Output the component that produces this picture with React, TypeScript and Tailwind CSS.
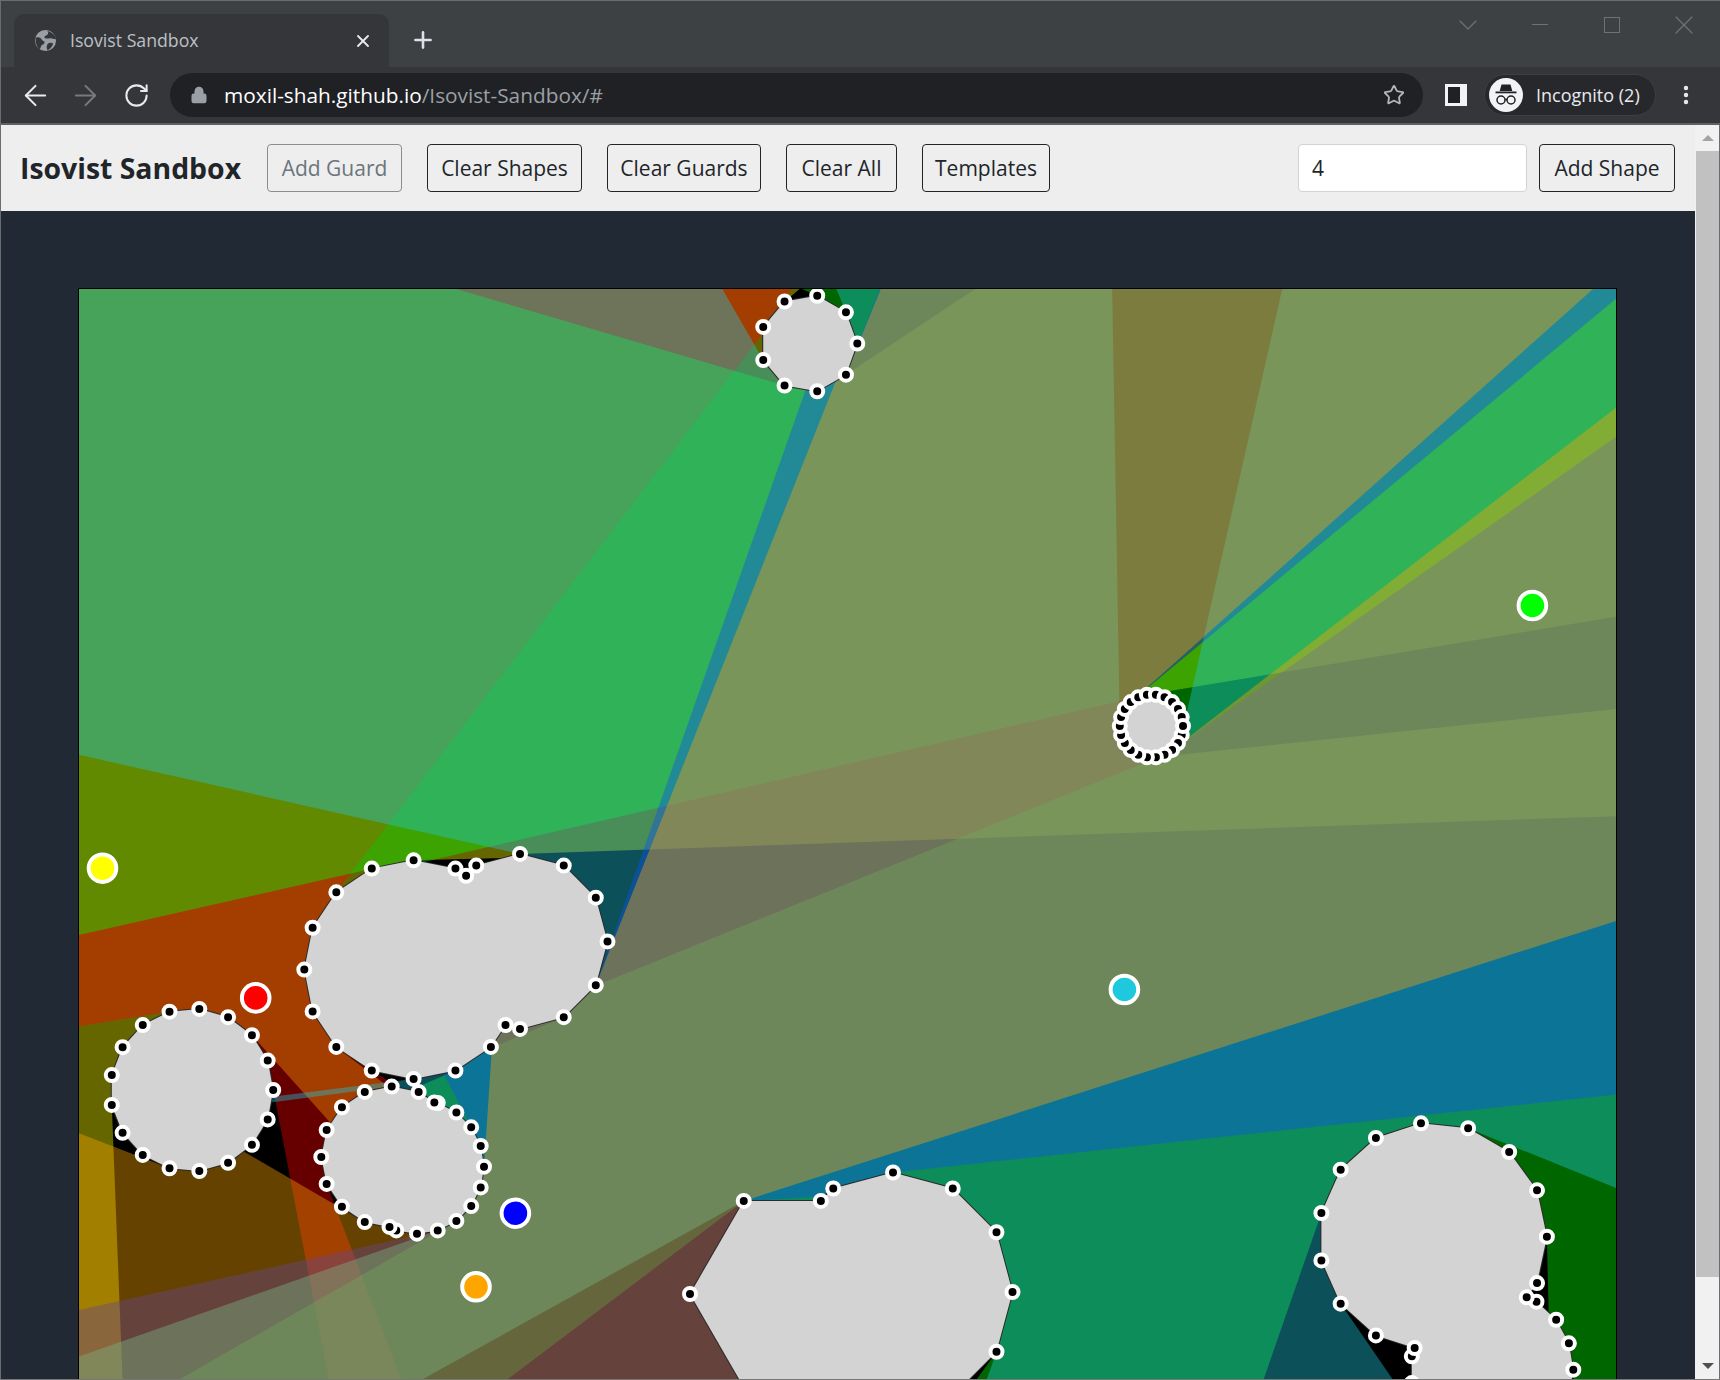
// App.tsx - Isovist Sandbox inside a Chrome incognito window
import { ArrowLeft, ArrowRight, ChevronDown, Lock, MoreVertical, Plus, RotateCw, Star, X } from 'lucide-react';

type Pt = [number, number];

// regular polygons in page coordinates: cx, cy, radius, sides
const shapes: number[][] = [
  [808.8, 343.5, 48.5, 9],
  [1151.4, 726, 31.6, 22],
  [413.6, 969.6, 109.3, 16],
  [520, 941.4, 87.5, 12],
  [191.8, 1090, 81.4, 17],
  [391.7, 1157, 70.4, 16],
  [417, 1166.7, 67, 20],
  [797.5, 1294, 107.5, 6],
  [893, 1292, 119.5, 12],
  [1432.9, 1236.7, 114, 15],
  [1492, 1369.7, 81.3, 19],
];

const polys: Pt[][] = shapes.map(([cx, cy, r, n]) =>
  Array.from({ length: n }, (_, k): Pt => {
    const a = (k * 2 * Math.PI) / n;
    return [cx + r * Math.cos(a), cy - r * Math.sin(a)];
  }),
);

const bounds: Pt[] = [[79, 289], [1616, 289], [1616, 1826], [79, 1826]];

const guards: { at: Pt; color: string }[] = [
  { at: [102.5, 868.2], color: '#ffff00' },
  { at: [255.7, 997.9], color: '#ff0000' },
  { at: [1532.4, 605.5], color: '#00ff00' },
  { at: [515.4, 1213.2], color: '#0000ff' },
  { at: [1124.4, 989.5], color: '#1ec9de' },
  { at: [476, 1286.8], color: '#ffa500' },
];

function edges(p: Pt[]): [Pt, Pt][] {
  return p.map((a, i) => [a, p[(i + 1) % p.length]]);
}

function inside(pt: Pt, p: Pt[]) {
  let hit = false;
  for (const [a, b] of edges(p)) {
    if (a[1] > pt[1] !== b[1] > pt[1] && pt[0] < ((b[0] - a[0]) * (pt[1] - a[1])) / (b[1] - a[1]) + a[0]) hit = !hit;
  }
  return hit;
}

function crossing(a: Pt, b: Pt, c: Pt, d: Pt): Pt | null {
  const rx = b[0] - a[0];
  const ry = b[1] - a[1];
  const sx = d[0] - c[0];
  const sy = d[1] - c[1];
  const den = rx * sy - ry * sx;
  if (Math.abs(den) < 1e-9) return null;
  const t = ((c[0] - a[0]) * sy - (c[1] - a[1]) * sx) / den;
  const u = ((c[0] - a[0]) * ry - (c[1] - a[1]) * rx) / den;
  return t > 0 && t < 1 && u > 0 && u < 1 ? [a[0] + rx * t, a[1] + ry * t] : null;
}

const polyEdges = polys.flatMap(edges);
const allEdges = [...polyEdges, ...edges(bounds)];

// where two shapes meet, the outline gets a handle too
const joins: Pt[] = [];
polys.forEach((p, i) => {
  polys.slice(i + 1).forEach((q) => {
    for (const [a, b] of edges(p)) {
      for (const [c, d] of edges(q)) {
        const x = crossing(a, b, c, d);
        if (x) joins.push(x);
      }
    }
  });
});

const handles: Pt[] = [
  ...polys.flatMap((p, i) =>
    [...p].reverse().filter((v) => !polys.some((q, j) => j !== i && inside(v, q))),
  ),
  ...joins,
];

function isovist(g: Pt) {
  const targets = [...polys.flat(), ...joins, ...bounds];
  const angles = targets.flatMap((t) => {
    const a = Math.atan2(t[1] - g[1], t[0] - g[0]);
    return [a - 1e-4, a, a + 1e-4];
  });
  angles.sort((x, y) => x - y);
  const pts = angles.map((a) => {
    const dx = Math.cos(a);
    const dy = Math.sin(a);
    let best = Infinity;
    for (const [c, d] of allEdges) {
      const sx = d[0] - c[0];
      const sy = d[1] - c[1];
      const den = dx * sy - dy * sx;
      if (Math.abs(den) < 1e-12) continue;
      const t = ((c[0] - g[0]) * sy - (c[1] - g[1]) * sx) / den;
      const u = ((c[0] - g[0]) * dy - (c[1] - g[1]) * dx) / den;
      if (t > 0 && u >= 0 && u <= 1 && t < best) best = t;
    }
    return `${(g[0] + dx * best).toFixed(2)},${(g[1] + dy * best).toFixed(2)}`;
  });
  return pts.join(' ');
}

const pointList = (p: Pt[]) => p.map((v) => `${v[0].toFixed(2)},${v[1].toFixed(2)}`).join(' ');

function Scene() {
  return (
    <svg viewBox="79 289 1537 1537" className="block w-[1537px] h-[1537px]">
      <rect x="79" y="289" width="1537" height="1537" fill="#000000" />
      {guards.map((g) => (
        <polygon key={g.color} points={isovist(g.at)} fill={g.color} fillOpacity={0.4} />
      ))}
      {polys.map((p, i) => (
        <polygon key={i} points={pointList(p)} fill="none" stroke="#2a2a2a" strokeWidth={2} />
      ))}
      {polys.map((p, i) => (
        <polygon key={i} points={pointList(p)} fill="#d3d3d3" />
      ))}
      {handles.map((h, i) => (
        <circle key={i} cx={h[0]} cy={h[1]} r={6} fill="#000000" stroke="#ffffff" strokeWidth={4} />
      ))}
      {guards.map((g) => (
        <circle key={g.color} cx={g.at[0]} cy={g.at[1]} r={13.8} fill={g.color} stroke="#ffffff" strokeWidth={4} />
      ))}
    </svg>
  );
}

function NavButton({ label, width, disabled }: { label: string; width: string; disabled?: boolean }) {
  return (
    <button
      className={`${width} h-[48px] shrink-0 rounded-[4px] border bg-transparent pt-[1px] text-[21px] whitespace-nowrap ${
        disabled ? 'border-[#8a8d90] text-[#6c757d]' : 'border-[#212529] text-[#212529]'
      }`}
    >
      {label}
    </button>
  );
}

function Globe() {
  return (
    <svg viewBox="0 0 24 24" className="w-[23px] h-[23px]">
      <circle cx="12" cy="12" r="11" fill="#9aa0a6" />
      <path d="M2 9c3-1 5 0 6 2s3 1 3 3-2 2-3 3-1 3-2 4C3 19 1 14 2 9zM14 2c2 3 0 4-2 5s-1 3 1 3 4-1 6 0 3 0 4 1c0-4-4-8-9-9zM14 16c2-2 4-2 6-1-1 3-3 6-6 7-1-2-1-4 0-6z" fill="#35363a" />
    </svg>
  );
}

function IncognitoBadge() {
  return (
    <svg viewBox="0 0 34 34" className="w-[34px] h-[34px] shrink-0">
      <circle cx="17" cy="17" r="17" fill="#f1f3f4" />
      <path d="M12.5 6.5h9l1.8 6.5h-12.6z" fill="#202124" />
      <rect x="6.5" y="13.5" width="21" height="1.8" fill="#202124" />
      <circle cx="12" cy="22" r="4" fill="none" stroke="#202124" strokeWidth="1.5" />
      <circle cx="22" cy="22" r="4" fill="none" stroke="#202124" strokeWidth="1.5" />
      <path d="M16 21.5h2" stroke="#202124" strokeWidth="1.5" />
    </svg>
  );
}

function WindowControls() {
  return (
    <div className="self-start h-[47px] ml-auto flex items-center text-[#6f7275]">
      <div className="w-[72px] flex justify-center">
        <ChevronDown size={32} strokeWidth={0.9} />
      </div>
      <div className="w-[72px] flex justify-center">
        <div className="w-[16px] h-px bg-[#6f7275]" />
      </div>
      <div className="w-[72px] flex justify-center">
        <div className="w-[16px] h-[16px] border border-[#6f7275]" />
      </div>
      <div className="w-[72px] flex justify-center">
        <X size={32} strokeWidth={0.9} />
      </div>
    </div>
  );
}

function BrowserChrome() {
  return (
    <div className="shrink-0 w-full text-white border-t border-l border-[#6b6c6e]">
      <div className="h-[66px] bg-[#3d4144] flex items-end pl-[13px]">
        <div className="w-[375px] h-[53px] rounded-t-[10px] bg-[#35363a] flex items-center pl-[20px] pr-[16px]">
          <Globe />
          <span className="ml-[13px] text-[17.7px] text-[#bdc1c6] flex-1">Isovist Sandbox</span>
          <X size={20} strokeWidth={2.2} className="text-[#e8eaed]" />
        </div>
        <div className="self-stretch flex items-end flex-1">
          <Plus size={26} strokeWidth={2.4} className="text-[#dee1e6] ml-[21px] mb-[14px] shrink-0" />
          <WindowControls />
        </div>
      </div>
      <div className="h-[58px] bg-[#35363a] border-b-[2px] border-[#5f6062] flex items-center">
        <div className="flex items-center w-[169px] pl-[9px]">
          <div className="w-[50.5px] flex justify-center">
            <ArrowLeft size={33} strokeWidth={1.5} className="text-[#e8eaed] shrink-0" />
          </div>
          <div className="w-[50.5px] flex justify-center">
            <ArrowRight size={33} strokeWidth={1.5} className="text-[#77797c] shrink-0" />
          </div>
          <div className="w-[50.5px] flex justify-center">
            <RotateCw size={27} strokeWidth={1.8} className="text-[#e8eaed] shrink-0" />
          </div>
        </div>
        <div className="w-[1253px] h-[44px] rounded-full bg-[#202124] flex items-center pl-[20px] pr-[18px]">
          <Lock size={18} fill="#9aa0a6" className="text-[#9aa0a6]" />
          <span className="ml-[16px] pt-[1px] text-[20.8px] flex-1">
            moxil-shah.github.io<span className="text-[#9aa0a6]">/Isovist-Sandbox/#</span>
          </span>
          <Star size={22} strokeWidth={2} className="text-[#b4b7ba]" />
        </div>
        <div className="ml-[22px] w-[22px] h-[22px] border-y-[3px] border-l-[3px] border-r-[7px] border-[#f1f3f4] bg-[#202124]" />
        <div className="ml-[17px] w-[172px] h-[42px] rounded-full bg-[#27282c] border border-[#3e3f43] flex items-center pl-[4px]">
          <IncognitoBadge />
          <span className="ml-[13px] text-[18px] text-[#e8eaed] whitespace-nowrap">Incognito (2)</span>
        </div>
        <MoreVertical size={24} strokeWidth={2.4} className="ml-[18px] text-[#e8eaed]" />
      </div>
    </div>
  );
}

function ScrollBar() {
  return (
    <div className="w-[25px] shrink-0 bg-[#f1f1f1] flex flex-col items-center border-r border-[#6b6c6e] pl-[1px]">
      <div className="h-[26px] flex items-center justify-center">
        <div className="w-0 h-0 border-x-[6px] border-x-transparent border-b-[6px] border-b-[#a3a3a3]" />
      </div>
      <div className="w-full h-[1126px] bg-[#c1c1c1]" />
      <div className="mt-auto mb-[10px] w-0 h-0 border-x-[6px] border-x-transparent border-t-[6px] border-t-[#505050]" />
    </div>
  );
}

export default function App() {
  return (
    <div
      className="w-[1720px] h-[1380px] overflow-hidden flex flex-col bg-[#212934] border-b border-[#777]"
      style={{ fontFamily: '"Open Sans", "Noto Sans", sans-serif' }}
    >
      <BrowserChrome />
      <div className="flex flex-1 min-h-0 border-l border-[#6b6c6e]">
        <div className="flex-1 min-w-0 flex flex-col">
          <nav className="h-[86px] shrink-0 bg-[#eeeeee] flex items-center pl-[20px] pr-[20px] gap-[25px]">
            <span className="w-[221px] -ml-[1px] mr-[1px] text-[28.4px] font-bold text-[#212529] whitespace-nowrap">Isovist Sandbox</span>
            <NavButton label="Add Guard" width="w-[135px]" disabled />
            <NavButton label="Clear Shapes" width="w-[155px]" />
            <NavButton label="Clear Guards" width="w-[154px]" />
            <NavButton label="Clear All" width="w-[111px]" />
            <NavButton label="Templates" width="w-[128px]" />
            <div className="ml-auto flex gap-[12px]">
              <input
                readOnly
                value="4"
                className="w-[229px] h-[48px] rounded-[4px] border border-[#ced4da] bg-white px-[13px] text-[21px] text-[#212529]"
              />
              <NavButton label="Add Shape" width="w-[136px]" />
            </div>
          </nav>
          <div className="flex-1 min-h-0 pt-[77px] px-[77px]">
            <div className="border border-black w-[1539px]">
              <Scene />
            </div>
          </div>
        </div>
        <ScrollBar />
      </div>
    </div>
  );
}
